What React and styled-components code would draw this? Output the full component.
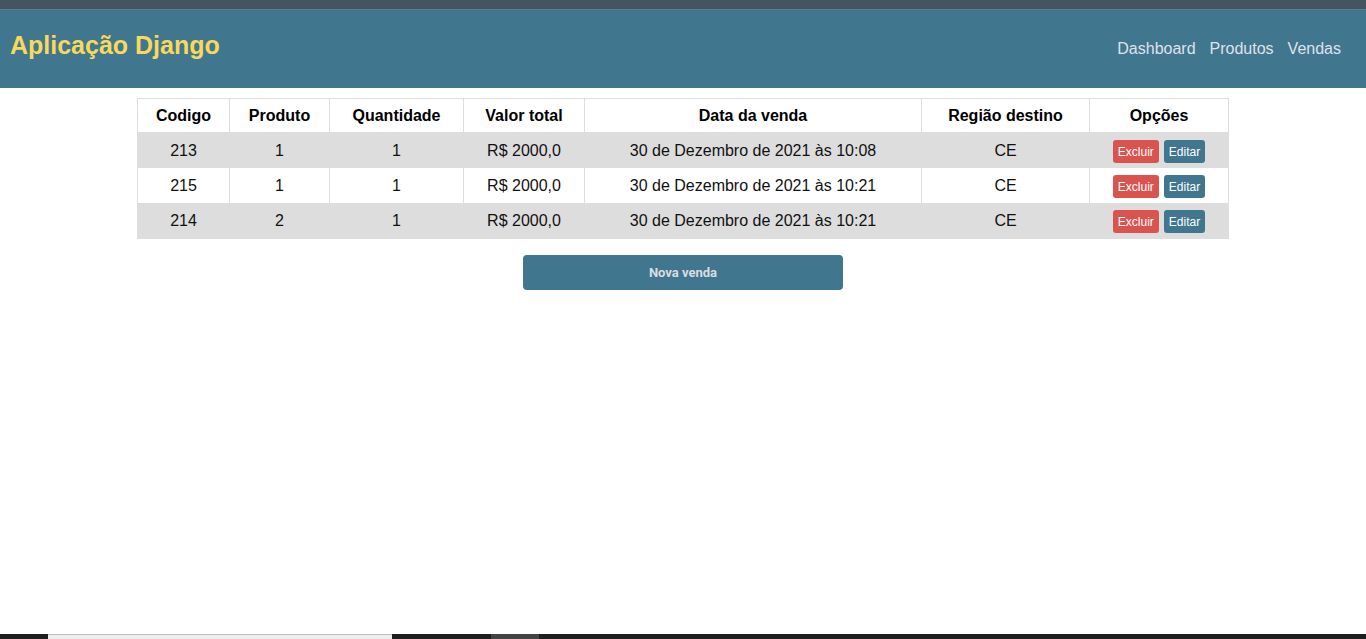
import styled, { createGlobalStyle } from "styled-components";

const GlobalStyle = createGlobalStyle`
  html, body {
    margin: 0;
    padding: 0;
    background: #fff;
    font-family: "Liberation Sans", Arial, sans-serif;
  }
`;

const vendas = [
  { codigo: 213, produto: 1, qtd: 1, valor: "R$ 2000,0", data: "30 de Dezembro de 2021 às 10:08", regiao: "CE" },
  { codigo: 215, produto: 1, qtd: 1, valor: "R$ 2000,0", data: "30 de Dezembro de 2021 às 10:21", regiao: "CE" },
  { codigo: 214, produto: 2, qtd: 1, valor: "R$ 2000,0", data: "30 de Dezembro de 2021 às 10:21", regiao: "CE" },
];

const colunas = [
  { nome: "Codigo", w: 92 },
  { nome: "Produto", w: 100 },
  { nome: "Quantidade", w: 134 },
  { nome: "Valor total", w: 121 },
  { nome: "Data da venda", w: 337 },
  { nome: "Região destino", w: 168 },
  { nome: "Opções", w: 139 },
];

export default function App() {
  return (
    <>
      <GlobalStyle />
      <Page>
        <TopStrip />
        <Header>
          <Title>Aplicação Django</Title>
          <Nav>
            <NavLink>Dashboard</NavLink>
            <NavLink>Produtos</NavLink>
            <NavLink>Vendas</NavLink>
          </Nav>
        </Header>
        <Main>
          <Table>
            <colgroup>
              {colunas.map((c) => (
                <col key={c.nome} style={{ width: c.w }} />
              ))}
            </colgroup>
            <thead>
              <tr>
                {colunas.map((c) => (
                  <Th key={c.nome}>{c.nome}</Th>
                ))}
              </tr>
            </thead>
            <tbody>
              {vendas.map((v, i) => (
                <Row key={v.codigo} $odd={i % 2 === 0}>
                  <Td>{v.codigo}</Td>
                  <Td>{v.produto}</Td>
                  <Td>{v.qtd}</Td>
                  <Td>{v.valor}</Td>
                  <Td>{v.data}</Td>
                  <Td>{v.regiao}</Td>
                  <Td>
                    <Actions>
                      <SmallButton $danger>Excluir</SmallButton>
                      <SmallButton>Editar</SmallButton>
                    </Actions>
                  </Td>
                </Row>
              ))}
            </tbody>
          </Table>
          <NewButton>Nova venda</NewButton>
        </Main>
        <Taskbar>
          <Seg $w={48} />
          <Seg $w={344} $light />
          <Seg $w={99} />
          <Seg $w={48} $mid />
          <Seg $grow />
        </Taskbar>
      </Page>
    </>
  );
}

const Page = styled.div`
  min-height: 639px;
  display: flex;
  flex-direction: column;
`;

const TopStrip = styled.div`
  height: 9px;
  background: #45555f;
  border-bottom: 1px solid #5f7d8d;
`;

const Header = styled.header`
  height: 78px;
  background: #41768f;
  display: flex;
  justify-content: space-between;
  align-items: flex-start;
  padding: 0 25px 0 10px;
`;

const Title = styled.h1`
  margin: 20px 0 0;
  font-size: 25px;
  font-weight: 700;
  color: #f7d95c;
  line-height: 30px;
`;

const Nav = styled.nav`
  display: flex;
  gap: 14px;
  margin-top: 29px;
`;

const NavLink = styled.a`
  font-size: 16px;
  color: #dfe3e6;
  line-height: 20px;
  cursor: pointer;
`;

const Main = styled.main`
  flex: 1;
  display: flex;
  flex-direction: column;
  align-items: center;
  padding-top: 10px;
`;

const Table = styled.table`
  width: 1092px;
  border-collapse: collapse;
  table-layout: fixed;
  border: 1px solid #ddd;
`;

const Th = styled.th`
  height: 33px;
  font-size: 16px;
  font-weight: 700;
  color: #000;
  text-align: center;
  border: 1px solid #ddd;
  padding: 0;
`;

const Row = styled.tr`
  background: ${(p) => (p.$odd ? "#dddddd" : "#fff")};
`;

const Td = styled.td`
  height: 35px;
  font-size: 16px;
  color: #111;
  text-align: center;
  border-left: 1px solid #ddd;
  border-right: 1px solid #ddd;
  padding: 0;
`;

const Actions = styled.div`
  display: flex;
  justify-content: center;
  gap: 5px;
  padding-top: 2px;
`;

const SmallButton = styled.button`
  height: 23px;
  padding: 0 5px;
  border: none;
  border-radius: 3px;
  font-family: "Liberation Sans", Arial, sans-serif;
  font-size: 12px;
  color: #fff;
  background: ${(p) => (p.$danger ? "#d9534f" : "#41768f")};
`;

const NewButton = styled.button`
  margin-top: 16px;
  width: 320px;
  height: 35px;
  border: none;
  border-radius: 4px;
  background: #41768f;
  color: #d9dde0;
  font-family: Roboto, "Liberation Sans", sans-serif;
  font-size: 13px;
  font-weight: 700;
`;

const Taskbar = styled.div`
  height: 5px;
  display: flex;
`;

const Seg = styled.div`
  width: ${(p) => (p.$grow ? "auto" : `${p.$w}px`)};
  flex: ${(p) => (p.$grow ? 1 : "none")};
  background: ${(p) => (p.$light ? "#eeeeee" : p.$mid ? "#444" : "#1e1e1e")};
  border-top: ${(p) => (p.$light ? "1px solid #bbb" : "none")};
`;
